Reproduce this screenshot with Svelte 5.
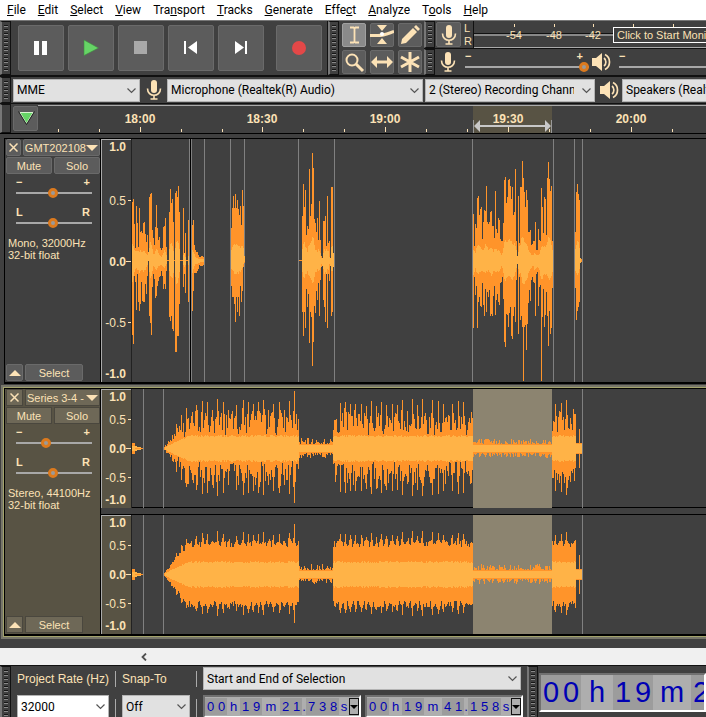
<script lang="ts">
  type Clip = { x: number; up: number[]; down: number[] };

  const menus = [
    ['', 'F', 'ile'], ['', 'E', 'dit'], ['', 'S', 'elect'], ['', 'V', 'iew'],
    ['Tra', 'n', 'sport'], ['', 'T', 'racks'], ['', 'G', 'enerate'], ['Effe', 'c', 't'],
    ['', 'A', 'nalyze'], ['T', 'o', 'ols'], ['', 'H', 'elp'],
  ];
  const transport = ['Pause', 'Play', 'Stop', 'Skip to Start', 'Skip to End', 'Record'];
  const tools = ['Selection', 'Envelope', 'Draw', 'Zoom', 'Time Shift', 'Multi'];
  let activeTool = $state('Selection');

  const meterMarks = [
    { x: 40, label: '-54' }, { x: 80, label: '-48' }, { x: 119, label: '-42' },
    { x: 159, label: '' }, { x: 199, label: '' },
  ];

  const hours = [
    { x: 102, label: '18:00' }, { x: 224, label: '18:30' }, { x: 347, label: '19:00' },
    { x: 470, label: '19:30' }, { x: 593, label: '20:00' },
  ];
  const minor = [20, 61, 143, 184, 265, 306, 388, 429, 511, 552, 634];

  const selStart = 342;
  const selEnd = 421;

  // peaks in pixels above and below the centre line, one per column
  const mono: Clip[] = [
    {
      x: 1,
      up: [58,61,36,12,54,37,13,52,28,29,27,37,38,26,18,25,8,63,66,67,30,22,15,33,55,32,20,23,12,10,12,33,34,42,13,0,0,48,71,57,61,38,0,67,69,63,74,48,0,0,0,52,7,27,0,0,40,0],
      down: [74,83,15,21,49,13,41,50,43,21,40,41,41,23,33,15,0,55,62,74,26,13,18,37,35,25,20,16,15,10,15,28,23,28,10,0,0,56,60,55,68,70,0,91,91,75,75,43,0,0,0,26,13,32,0,0,41,0],
    },
    { x: 61, up: [35,40,15,10,8,8,5,3,3,4,4,3], down: [50,30,12,12,12,10,8,4,5,5,5,4] },
    { x: 100, up: [32,52,64,52,66,52,60,51,45,54,35,70,54,4], down: [25,36,36,43,61,36,51,36,55,25,41,30,6,2] },
    {
      x: 168,
      up: [0,0,0,44,76,53,70,25,34,31,91,44,56,107,92,41,37,28,42,20,59,20,4,2,39,39,44,14,64,17,19,2,73,73,7],
      down: [0,0,0,51,75,51,67,28,46,33,82,51,56,105,81,45,52,30,39,22,55,19,6,5,39,46,61,13,67,13,20,5,55,51,6],
    },
    {
      x: 342,
      up: [46,14,36,32,62,64,45,51,53,21,38,50,49,74,38,36,38,48,49,34,34,22,69,31,27,42,40,21,19,19,37,80,83,57,63,80,81,74,61,73,45,48,91,19,4,64,17,73,73,99,82,68,53,70,60,28,28,30,15,16,19,19,38,10,10,31,20,19,72,53,27,63,61,25,82,98,81,69,74,19],
      down: [67,16,34,25,67,41,36,45,46,22,44,55,28,51,31,36,29,55,53,55,35,25,54,39,33,41,44,22,21,16,38,81,86,53,54,66,52,46,75,78,55,46,61,19,3,73,16,59,55,66,120,66,64,89,63,42,29,40,19,16,21,22,55,13,11,45,26,24,120,56,28,66,54,31,55,85,50,73,67,27],
    },
    { x: 444, up: [28,68,76,66,60,2,1], down: [27,59,50,46,41,2,1] },
  ];
  const monoEdges = [58, 60, 73, 99, 113, 167, 203, 341, 422, 443, 451];

  // the drum hits that stand out of the stereo recording
  const hits: Record<number, number> = {
    41: 13, 45: 24, 50: 33, 55: 40, 65: 43, 71: 47, 76: 46, 81: 38, 86: 49, 92: 46, 97: 38,
    105: 43, 112: 48, 117: 46, 122: 44, 127: 46, 132: 48, 137: 38, 142: 44, 148: 46, 153: 38,
    158: 47, 163: 57, 209: 45, 214: 46, 219: 44, 224: 44, 230: 44, 235: 42, 240: 47, 245: 42,
    250: 46, 255: 43, 261: 44, 266: 43, 271: 48, 276: 37, 281: 49, 286: 43, 291: 49, 301: 48,
    307: 47, 312: 44, 321: 44, 327: 47, 332: 46, 340: 36, 424: 44, 430: 45, 435: 48, 443: 34,
  };

  function noise(seed: number) {
    let s = seed;
    return () => {
      s = (s * 1103515245 + 12345) % 2147483648;
      return s / 2147483648;
    };
  }

  function stereo(seed: number, base: number, spread: number, hitScale: number) {
    const rnd = noise(seed);
    const up: number[] = [];
    const down: number[] = [];
    const inner: number[] = [];
    for (let x = 1; x <= 450; x++) {
      const r1 = rnd();
      const r2 = rnd();
      if (x < 13) {
        const v = x < 4 ? 5 : x < 6 ? 2 : x < 10 ? 1 : 0;
        up.push(v); down.push(v); inner.push(Math.min(v, 2));
      } else if (x < 33) {
        up.push(0); down.push(0); inner.push(0);
      } else if ((x > 167 && x < 202) || (x > 341 && x < 421)) {
        up.push(4 + Math.round(r1 * r1 * 6));
        down.push(4 + Math.round(r2 * r2 * 5));
        inner.push(3);
      } else if (x > 444) {
        const v = x === 448 ? 19 : 5;
        up.push(v); down.push(v); inner.push(4);
      } else {
        const ramp = Math.min(1, (x - 32) / 25);
        const hit = (hits[x] ?? 0) * hitScale;
        const side = Math.max(hits[x - 1] ?? 0, hits[x + 1] ?? 0) > 0 ? 3 : 0;
        up.push(Math.round(Math.max(hit, ramp * (base + side + (r1 - 0.5) * spread))));
        down.push(Math.round(Math.max(hit * 0.95, ramp * (base - 1 + side + (r2 - 0.5) * spread))));
        inner.push(Math.round(ramp * (11 + r1 * 2)));
      }
    }
    return { up, down, inner };
  }

  const left = stereo(7, 25, 24, 1);
  const right = stereo(23, 30, 7, 0.88);

  function bars(x: number, up: number[], down: number[], mid: number) {
    return up.map((u, i) =>
      u || down[i] ? `M${x + i} ${mid - u}h1v${u + down[i] + 1}h-1z` : ''
    ).join('');
  }

  function body(values: number[]) {
    return values.map((v, i) => {
      const near = (v + (values[i - 1] ?? v) + (values[i + 1] ?? v)) / 3;
      return Math.min(v, Math.round(near * 0.27));
    });
  }

  const tracks = [
    { name: 'GMT202108', info: 'Mono, 32000Hz', gain: 49, pan: 49, selected: false },
    { name: 'Series 3-4 -', info: 'Stereo, 44100Hz', gain: 38, pan: 49, selected: true },
  ];

  const startTime = ['00', 'h', '19', 'm', '21', '.', '738', 's'];
  const endTime = ['00', 'h', '19', 'm', '41', '.', '158', 's'];
  const position = ['00', 'h', '19', 'm', '21', 's'];
</script>

{#snippet mic()}
  <svg class="icon" width="16" height="20" viewBox="0 0 16 20" aria-hidden="true">
    <rect x="5" y="0" width="6" height="13" rx="3" fill="#fce2b6" />
    <path d="M1.500 8.500c0 9 13 9 13 0M8 15v4M4.500 19h7" fill="none" stroke="#fce2b6" stroke-width="1.600" />
  </svg>
{/snippet}

{#snippet speaker()}
  <svg class="icon" width="20" height="18" viewBox="0 0 20 18" aria-hidden="true">
    <path d="M1 5h4l6-5v18l-6-5H1z" fill="#fce2b6" />
    <path d="M13 5c2.500 2 2.500 6 0 8M14 1.500c6 3 6 12 0 15" fill="none" stroke="#fce2b6" stroke-width="1.700" />
  </svg>
{/snippet}

{#snippet chevron()}
  <svg width="9" height="6" viewBox="0 0 9 6" aria-hidden="true">
    <path d="M.5.5l4 4 4-4" fill="none" stroke="#555" stroke-width="1.200" />
  </svg>
{/snippet}

{#snippet dropdown(label: string, value: string, kind: string)}
  <div class="dropdown {kind}">
    <select aria-label={label}><option>{value}</option></select>
    {@render chevron()}
  </div>
{/snippet}

{#snippet transportIcon(name: string)}
  <svg width="46" height="46" viewBox="0 0 46 46" aria-hidden="true">
    {#if name === 'Pause'}
      <path d="M16 16h5v14h-5zM24 16h5v14h-5z" fill="#fff" />
    {:else if name === 'Play'}
      <path d="M16 15l14.500 8-14.500 7.500z" fill="#66d466" stroke="#3f8f3f" stroke-width=".6" />
    {:else if name === 'Stop'}
      <path d="M16 16h13v13H16z" fill="#a9a9a9" />
    {:else if name === 'Skip to Start'}
      <path d="M16 16h2v13h-2zM29 16v13l-9-6.500z" fill="#fff" />
    {:else if name === 'Skip to End'}
      <path d="M27 16h2v13h-2zM17 16v13l9-6.500z" fill="#fff" />
    {:else}
      <circle cx="23" cy="23" r="7" fill="#e34848" />
    {/if}
  </svg>
{/snippet}

{#snippet toolIcon(name: string)}
  <svg width="24" height="24" viewBox="0 0 24 24" fill="none" stroke="#fce2b6" stroke-width="2" aria-hidden="true">
    {#if name === 'Selection'}
      <path d="M8 4.500h3.500l1 1 1-1H17M8 19.500h3.500l1-1 1 1H17M12.500 5v14" stroke-width="1.800" />
    {:else if name === 'Envelope'}
      <path d="M7 2h10l-5 6zM7 21h10l-5-6z" fill="#fce2b6" stroke="none" />
      <path d="M0 12.500h8c6 0 10-2 16-4" stroke-width="3" />
      <circle cx="12" cy="11" r="2" fill="#fff" stroke="none" />
    {:else if name === 'Draw'}
      <path d="M3 21l1-5L15 5l4 4L8 20z" fill="#fce2b6" stroke="none" />
      <path d="M16 4l2-2 4 4-2 2z" fill="#fce2b6" stroke="none" />
    {:else if name === 'Zoom'}
      <circle cx="10" cy="10" r="5.500" />
      <path d="M14 14l7 7" stroke-width="3" />
    {:else if name === 'Time Shift'}
      <path d="M5 12h14" stroke-width="3" />
      <path d="M1 12l6-6v12zM23 12l-6-6v12z" fill="#fce2b6" stroke="none" />
    {:else}
      <path d="M12 2v20M3 7l18 10M3 17L21 7" stroke-width="3" />
    {/if}
  </svg>
{/snippet}

{#snippet scale(height: number, half: number, mid: number)}
  <svg class="scale" width="30" {height} aria-hidden="true">
    <text x="24" y="11" class="strong">1.0</text>
    <text x="24" y={mid - half + 4}>0.5</text>
    <text x="24" y={mid + 4} class="strong">0.0</text>
    <text x="24" y={mid + half + 4}>-0.5</text>
    <text x="24" y={height - 5} class="strong">-1.0</text>
    <path d="M26 {mid - half - 1}h4v1h-4zM24 {mid - 1}h6v1h-6zM26 {mid + half - 1}h4v1h-4z" fill="#fce2b6" />
  </svg>
{/snippet}

{#snippet timeBox(label: string, parts: string[], kind: string)}
  <div class="time {kind}" role="group" aria-label={label}>
    {#each parts as part}
      <span class="part" class:digits={/\d/.test(part)} class:dot={part === '.'} class:wide={part === 'm'} class:last={part === 's'}>
        {#each part as char}<span class="char">{char}</span>{/each}
      </span>
    {/each}
    {#if kind === 'small'}
      <button class="time-menu" aria-label="{label} format">
        <svg width="8" height="4" aria-hidden="true"><path d="M0 0h8l-4 4z" fill="#000" /></svg>
      </button>
    {/if}
  </div>
{/snippet}

<div class="window">
  <nav class="menubar">
    {#each menus as [pre, key, post]}
      <button>{pre}<u>{key}</u>{post}</button>
    {/each}
  </nav>

  <div class="toolbars">
    <div class="grabber"></div>
    <div class="transport">
      {#each transport as name}
        <button class="raised" class:record={name === 'Record'} aria-label={name}>
          {@render transportIcon(name)}
        </button>
      {/each}
    </div>
    <div class="grabber"></div>
    <div class="tools">
      {#each tools as name}
        <button class="raised" class:active={activeTool === name} aria-label={name} onclick={() => (activeTool = name)}>
          {@render toolIcon(name)}
        </button>
      {/each}
    </div>
    <div class="levels">
      <div class="level-row">
        <div class="grabber"></div>
        <button class="raised meter-button" aria-label="Record Meter">{@render mic()}</button>
        <div class="channels"><span>L</span><span>R</span></div>
        <div class="meter">
          <svg width="100%" height="27" aria-hidden="true">
            <rect y="12" width="100%" height="1" fill="#111" />
            <rect y="13" width="100%" height="2" fill="#888" />
            <rect y="26" width="100%" height="1" fill="#aaa" />
            {#each meterMarks as mark}
              <rect x={mark.x} y="3" width="1" height="3" fill="#fce2b6" />
              <text x={mark.x} y="18">{mark.label}</text>
            {/each}
          </svg>
          <button class="monitor">Click to Start Monitoring</button>
        </div>
      </div>
      <div class="level-row">
        <div class="grabber"></div>
        <span class="mixer-icon">{@render mic()}</span>
        <div class="mixer">
          <div class="signs"><span>−</span><span>+</span></div>
          <input type="range" value="100" aria-label="Recording Volume" />
        </div>
        <span class="mixer-speaker">{@render speaker()}</span>
        <div class="mixer">
          <div class="signs"><span>−</span><span>+</span></div>
          <input type="range" value="100" aria-label="Playback Volume" />
        </div>
      </div>
    </div>
  </div>

  <div class="devices">
    <div class="grabber"></div>
    {@render dropdown('Audio Host', 'MME', 'host')}
    <span class="device-icon">{@render mic()}</span>
    {@render dropdown('Recording Device', 'Microphone (Realtek(R) Audio)', 'input')}
    {@render dropdown('Recording Channels', '2 (Stereo) Recording Channels', 'count')}
    <span class="device-icon">{@render speaker()}</span>
    {@render dropdown('Playback Device', 'Speakers (Realtek(R) Audio)', 'output')}
  </div>

  <div class="timeline">
    <div class="grabber plain"></div>
    <button class="raised pin" aria-label="Pinned Play Head">
      <svg width="24" height="24" aria-hidden="true">
        <path d="M6 5.500h13l-6.500 11z" fill="#66d466" stroke="#d8f5d0" />
        <path d="M4.500 4.500l8 13 8-13" fill="none" stroke="#222" />
      </svg>
    </button>
    <svg class="ruler" width="100%" height="28">
      <rect x="435" y="0" width="79" height="28" fill="#585344" />
      {#each minor as x}
        <rect {x} y="23" width="1" height="3" fill="#fce2b6" />
      {/each}
      {#each hours as hour}
        <rect x={hour.x} y="21" width="1" height="5" fill="#fce2b6" />
        <text x={hour.x} y="17">{hour.label}</text>
      {/each}
      <path d="M435.500 14v13M513.500 14v13" stroke="#999" />
      <path d="M441 20h67" stroke="#c8c8c8" stroke-width="2" />
      <path d="M436 20l6-6v12zM513 20l-6-6v12z" fill="#c8c8c8" />
    </svg>
  </div>

  <main class="tracks">
    {#each tracks as track}
      <section class="track" class:selected={track.selected}>
        <div class="panel">
          <div class="row title-row">
            <button class="raised square" aria-label="Close track">
              <svg width="9" height="9" aria-hidden="true"><path d="M.5.5l8 8M8.500.5l-8 8" stroke="#fce2b6" stroke-width="1.500" /></svg>
            </button>
            <button class="raised name">
              <span>{track.name}</span>
              <svg width="12" height="6" aria-hidden="true"><path d="M0 0h12L6 6z" fill="#fce2b6" /></svg>
            </button>
          </div>
          <div class="row">
            <button class="raised half">Mute</button>
            <button class="raised half">Solo</button>
          </div>
          <div class="knob">
            <div class="signs"><span>−</span><span>+</span></div>
            <input type="range" value={track.gain} aria-label="Gain" />
          </div>
          <div class="knob pan">
            <div class="signs"><span>L</span><span>R</span></div>
            <input type="range" value={track.pan} aria-label="Pan" />
          </div>
          <p>{track.info}<br />32-bit float</p>
          <div class="row foot">
            <button class="raised square" aria-label="Collapse track">
              <svg width="12" height="6" aria-hidden="true"><path d="M0 6h12L6 0z" fill="#fce2b6" /></svg>
            </button>
            <button class="raised select">Select</button>
          </div>
        </div>

        {#if track.selected}
          <div class="lanes">
            {#each [left, right] as channel}
              <div class="lane">
                {@render scale(119, 29, 59)}
                <svg class="wave" width="100%" height="119" shape-rendering="crispEdges" aria-hidden="true">
                  <rect width="1" height="119" fill="#222" />
                  <rect x={selStart} width={selEnd - selStart} height="119" fill="#8c8470" />
                  <path d="M12 0h1v119h-1zM32 0h1v119h-1zM451 0h1v119h-1z" fill="#808080" />
                  <path d={bars(1, channel.up, channel.down, 59)} fill="#ff942a" />
                  <path d={bars(1, channel.inner, channel.inner, 59)} fill="#ffb347" />
                  <rect x="4" y="59" width="8" height="1" fill="#ff942a" />
                </svg>
              </div>
            {/each}
          </div>
        {:else}
          <div class="lanes">
            <div class="lane">
              {@render scale(243, 61, 122)}
              <svg class="wave" width="100%" height="243" shape-rendering="crispEdges" aria-hidden="true">
                <rect width="1" height="243" fill="#222" />
                <rect x="1" y="121" width="58" height="1" fill="#ff942a" />
                <rect x="168" y="121" width="35" height="1" fill="#ff942a" />
                {#each monoEdges as x}
                  <rect {x} width="1" height="243" fill="#808080" />
                {/each}
                <rect x="59" width="1" height="243" fill="#000" />
                {#each mono as clip}
                  <path d={bars(clip.x, clip.up, clip.down, 121)} fill="#ff942a" />
                  <path d={bars(clip.x, body(clip.up), body(clip.down), 121)} fill="#ffb347" />
                {/each}
              </svg>
            </div>
          </div>
        {/if}
      </section>
    {/each}
  </main>

  <div class="scrollbar">
    <button aria-label="Scroll left">
      <svg width="6" height="8" aria-hidden="true"><path d="M5 .5L1.500 4 5 7.500" fill="none" stroke="#505050" stroke-width="1.800" /></svg>
    </button>
  </div>

  <footer class="selection-bar">
    <div class="grabber"></div>
    <div class="field rate">
      <label for="rate">Project Rate (Hz)</label>
      <div class="dropdown white">
        <select id="rate"><option>32000</option></select>
        {@render chevron()}
      </div>
    </div>
    <div class="divider"></div>
    <div class="field snap">
      <label for="snap">Snap-To</label>
      <div class="dropdown">
        <select id="snap"><option>Off</option></select>
        {@render chevron()}
      </div>
    </div>
    <div class="divider"></div>
    <div class="range">
      {@render dropdown('Selection Mode', 'Start and End of Selection', 'mode')}
      <div class="times">
        {@render timeBox('Selection Start', startTime, 'small')}
        {@render timeBox('Selection End', endTime, 'small')}
      </div>
    </div>
    <div class="grabber"></div>
    {@render timeBox('Audio Position', position, 'big')}
  </footer>
</div>

<style>
  :global(body) {
    background: #404040;
  }
  .window {
    height: 100vh;
    overflow: hidden;
    background: #404040;
    color: #fce2b6;
    font-family: "Liberation Sans", Arial, sans-serif;
    font-size: 12px;
  }
  .window * {
    box-sizing: border-box;
  }
  button {
    padding: 0;
    border: none;
    background: none;
    color: inherit;
    font: inherit;
  }
  svg {
    display: block;
    flex: none;
  }

  .menubar {
    display: flex;
    gap: 12px;
    height: 20px;
    padding-left: 7px;
    background: #fff;
    color: #000;
    font-family: Roboto, "Open Sans", sans-serif;
  }
  .menubar button {
    white-space: nowrap;
  }
  .menubar u {
    text-decoration: underline 1px #000;
    text-decoration-skip-ink: none;
    text-underline-offset: 1px;
  }

  .raised {
    display: flex;
    align-items: center;
    justify-content: center;
    background: #5c5c5c;
    border: 1px solid #6a6a6a;
    border-radius: 2px;
  }
  .raised.active {
    background: #8a8a8a;
    border-color: #a0a0a0;
  }

  .grabber {
    flex: none;
    align-self: stretch;
    width: 11px;
    border: 1px solid #111;
    border-left: 2px solid #777;
    background: repeating-linear-gradient(#161616 0 1px, #888 1px 2px, #404040 2px 4px) 2px 3px / 4px calc(100% - 6px) no-repeat;
  }
  .grabber.plain {
    background: none;
  }

  .toolbars {
    display: flex;
    height: 57px;
    border-top: 1px solid #777;
    border-bottom: 2px solid #111;
  }
  .transport {
    display: flex;
    gap: 4px;
    padding: 4px 5px 0 7px;
    border-right: 1px solid #111;
  }
  .transport button {
    width: 46px;
    height: 46px;
  }
  .transport .record {
    margin-left: 8px;
  }
  .tools {
    display: grid;
    grid-template-columns: repeat(3, 24px);
    grid-auto-rows: 24px;
    gap: 3px 4px;
    padding: 2px 2px 0 3px;
  }
  .levels {
    flex: 1;
    min-width: 0;
  }
  .level-row {
    display: flex;
    align-items: center;
    height: 27px;
    overflow: hidden;
  }
  .level-row + .level-row {
    border-top: 1px solid #111;
  }
  .meter-button {
    flex: none;
    width: 25px;
    height: 25px;
    margin-left: 1px;
  }
  .channels {
    display: flex;
    flex: none;
    flex-direction: column;
    width: 12px;
    padding-left: 3px;
    line-height: 13px;
    font-size: 11px;
  }
  .meter {
    position: relative;
    flex: 1;
    border-left: 1px solid #111;
  }
  .meter text {
    fill: #fce2b6;
    font-size: 11px;
    text-anchor: middle;
  }
  .monitor {
    position: absolute;
    top: 6px;
    left: 139px;
    height: 16px;
    padding: 0 3px;
    border: 1px solid #fff;
    background: #404040;
    white-space: nowrap;
    font-size: 11px;
    line-height: 14px;
  }
  .mixer-icon {
    padding: 0 7px 0 5px;
  }
  .mixer-speaker {
    padding-right: 6px;
  }
  .mixer {
    flex: none;
    width: 128px;
    padding: 0 2px;
  }
  .signs {
    display: flex;
    justify-content: space-between;
    height: 10px;
    line-height: 8px;
    font-size: 11px;
    font-weight: bold;
  }
  .mixer .signs {
    padding-right: 6px;
  }

  input[type="range"] {
    display: block;
    appearance: none;
    width: 100%;
    height: 10px;
    margin: 0;
    background: linear-gradient(#a8a8a8, #a8a8a8) 0 4px / 100% 2px no-repeat;
  }
  input[type="range"]::-webkit-slider-thumb {
    appearance: none;
    width: 10px;
    height: 10px;
    border: 3px solid #dc7a1e;
    border-radius: 50%;
    background: #9a9a9a;
  }

  .devices {
    display: flex;
    align-items: center;
    height: 27px;
    border-bottom: 1px solid #111;
  }
  .dropdown {
    position: relative;
    flex: none;
    height: 23px;
    overflow: hidden;
  }
  .dropdown select {
    appearance: none;
    width: 100%;
    height: 100%;
    padding: 0 20px 0 3px;
    border: 1px solid #b4b4b4;
    border-radius: 0;
    background: #e1e1e1;
    color: #000;
    font-family: Roboto, "Open Sans", sans-serif;
    font-size: 12px;
  }
  .dropdown svg {
    position: absolute;
    top: 9px;
    right: 4px;
    pointer-events: none;
  }
  .dropdown.white select {
    background: #fff;
  }
  .host {
    width: 127px;
    margin-left: 2px;
  }
  .device-icon {
    display: flex;
    flex: none;
    justify-content: center;
    width: 27px;
  }
  .input {
    width: 256px;
    margin-right: 2px;
  }
  .count {
    width: 170px;
  }
  .output {
    width: 256px;
  }

  .timeline {
    display: flex;
    height: 30px;
    border-bottom: 1px solid #000;
  }
  .pin {
    flex: none;
    width: 25px;
    height: 25px;
    margin: 2px 0 0 2px;
  }
  .ruler {
    flex: 1;
    min-width: 0;
    margin-top: 1px;
    border-top: 1px solid #aaa;
  }
  .ruler text {
    fill: #fce2b6;
    font-weight: bold;
    text-anchor: middle;
  }

  .tracks {
    padding-top: 4px;
  }
  .track {
    display: flex;
    margin-left: 4px;
    border: solid #000;
    border-width: 1px 0 2px 1px;
  }
  .track.selected {
    margin: 4px 0 0 4px;
    box-shadow: 0 0 0 1px #a3a36c, 0 0 0 3px #77766a;
  }
  .panel {
    display: flex;
    flex: none;
    flex-direction: column;
    width: 96px;
    padding: 0 0 0 1px;
    border-right: 1px solid #000;
    font-size: 11px;
  }
  .selected .panel {
    background: #585344;
  }
  .selected .raised {
    background: #6e6857;
    border-color: #4a473e;
    border-radius: 0;
  }
  .row {
    display: flex;
    gap: 2px;
    height: 17px;
    margin-bottom: 1px;
  }
  .title-row .name {
    flex: 1;
    justify-content: space-between;
    padding: 0 1px;
    white-space: nowrap;
  }
  .square {
    width: 17px;
  }
  .half {
    flex: 1;
  }
  .select {
    width: 58px;
  }
  .knob {
    width: 76px;
    margin: 3px 0 0 10px;
  }
  .knob .signs {
    padding-right: 2px;
  }
  .pan {
    margin-top: 10px;
  }
  .panel p {
    margin: 9px 0 0 2px;
    line-height: 12px;
  }
  .foot {
    margin-top: auto;
  }

  .lanes {
    flex: 1;
    min-width: 0;
  }
  .lane {
    display: flex;
  }
  .lane + .lane {
    margin-top: 6px;
    border-top: 1px solid #000;
    box-shadow: 0 -6px #404040, 0 -7px #000;
  }
  .scale {
    border-top: 1px solid #aaa;
    border-left: 1px solid #aaa;
  }
  .selected .scale {
    background: #585344;
  }
  .scale text {
    fill: #fce2b6;
    text-anchor: end;
  }
  .scale .strong {
    font-weight: bold;
  }
  .wave {
    flex: 1;
    min-width: 0;
  }

  .scrollbar {
    display: flex;
    align-items: center;
    height: 17px;
    margin-top: 12px;
    padding-left: 141px;
    background: #f0f0f0;
  }

  .selection-bar {
    display: flex;
    height: 60px;
    border-top: 1px solid #111;
  }
  .field {
    display: flex;
    flex: none;
    flex-direction: column;
  }
  .field label {
    height: 29px;
    line-height: 26px;
    white-space: nowrap;
  }
  .rate {
    width: 92px;
    margin-left: 6px;
  }
  .snap {
    width: 68px;
  }
  .divider {
    flex: none;
    width: 1px;
    margin: 5px 6px 0;
    background: linear-gradient(#aaa 0 16px, transparent 16px 28px, #aaa 28px);
  }
  .range {
    flex: none;
    width: 318px;
    margin-right: 6px;
  }
  .mode {
    margin: 1px 0 5px;
  }
  .times {
    display: flex;
    gap: 4px;
  }
  .time {
    display: flex;
    align-items: center;
    background: #aeaeae;
    border: 2px solid #707070;
    border-right-color: #fff;
    border-bottom-color: #fff;
    color: #0000b4;
  }
  .part {
    display: flex;
    align-items: center;
    justify-content: center;
    height: 100%;
  }
  .digits {
    background: #9c9c9c;
  }
  .char {
    text-align: center;
  }
  .small {
    flex: 1;
    height: 23px;
    padding: 1px 0;
    font-size: 13px;
  }
  .small .part {
    width: 13px;
  }
  .small .digits {
    width: auto;
  }
  .small .digits .char {
    width: 11px;
  }
  .small .wide {
    width: 18px;
  }
  .small .dot {
    width: 4px;
  }
  .small .last {
    width: 10px;
  }
  .time-menu {
    display: flex;
    align-items: center;
    justify-content: center;
    width: 10px;
    height: 100%;
    border: 1px solid #111;
  }
  .big {
    flex: 1;
    height: 39px;
    min-width: 0;
    margin: 7px 0 0 1px;
    overflow: hidden;
    font-size: 29px;
  }
  .big .part {
    flex: none;
    width: 32px;
  }
  .big .digits {
    width: auto;
  }
  .big .digits .char {
    width: 20px;
  }
  .big .wide {
    width: 38px;
  }
</style>
